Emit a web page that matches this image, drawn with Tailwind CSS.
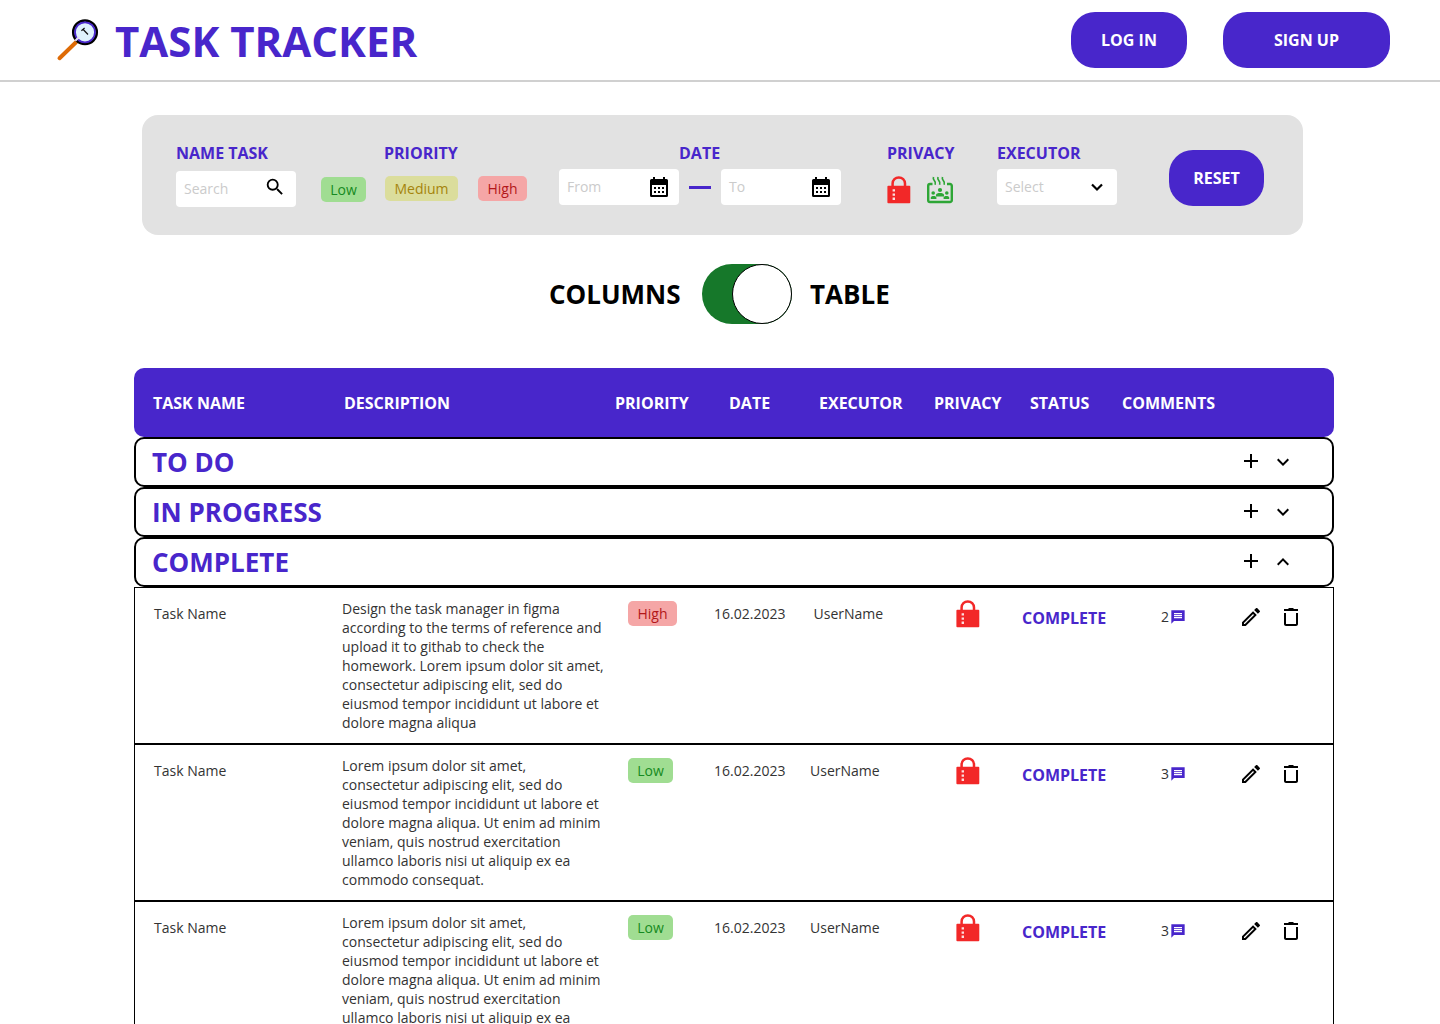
<!DOCTYPE html>
<html lang="en">
<head>
<meta charset="utf-8">
<title>Task Tracker</title>
<script src="https://cdn.jsdelivr.net/npm/@tailwindcss/browser@4"></script>
</head>
<body class="h-screen overflow-hidden bg-white font-['Open_Sans',sans-serif] text-black">
<svg class="hidden">
  <symbol id="lock" viewBox="0 0 24 28">
    <path d="M5.6 10V7.6a6.2 6.2 0 0 1 12.4 0V10" fill="none" stroke="#f22828" stroke-width="2.5"/>
    <rect x="0.4" y="9.7" width="22.9" height="17.6" rx="1" fill="#f22828"/>
    <path d="M5.6 13.2h2.4v2.4H5.600zM5.600 17.400h2.400v2.400H5.600zM5.600 21.600h2.400v2.400H5.600z" fill="#fbdede"/>
  </symbol>
  <symbol id="plus" viewBox="0 0 24 24"><path d="M11 5h2v6h6v2h-6v6h-2v-6H5v-2h6z"/></symbol>
  <symbol id="down" viewBox="0 0 24 24"><path d="M7.400 8.600 12 13.200l4.600-4.600L18 10l-6 6-6-6z"/></symbol>
  <symbol id="up" viewBox="0 0 24 24"><path d="M7.400 15.400 12 10.800l4.600 4.600L18 14l-6-6-6 6z"/></symbol>
  <symbol id="edit" viewBox="0 0 24 24"><path d="m14.060 9.020.92.92L5.920 19H5v-.92l9.060-9.060M17.660 3c-.25 0-.51.1-.7.290l-1.830 1.830 3.750 3.750 1.830-1.830a.996.996 0 0 0 0-1.410l-2.340-2.340c-.2-.2-.45-.29-.71-.29zm-3.600 3.190L3 17.250V21h3.750L17.810 9.940l-3.750-3.750z"/></symbol>
  <symbol id="trash" viewBox="0 0 24 24"><path d="M7 21c-1.100 0-2-.9-2-2V8h14v11c0 1.100-.9 2-2 2zM17 8H7v11h10zM5 4h4l1-1h4l1 1h4v2H5z"/></symbol>
  <symbol id="chat" viewBox="0 0 24 24"><path d="M22 2H2v20l4-4h16zM18 14H6v-2h12zm0-3H6V9h12zm0-3H6V6h12z"/></symbol>
  <symbol id="calendar" viewBox="0 0 18 20"><path fill-rule="evenodd" d="M3 0h2v2h8V0h2v2h1.500A1.500 1.500 0 0 1 18 3.500v15a1.500 1.500 0 0 1-1.500 1.500h-15A1.500 1.500 0 0 1 0 18.500v-15A1.500 1.500 0 0 1 1.500 2H3zM2 8v10h14V8zM4 10h2v2H4zM8 10h2v2H8zM12 10h2v2h-2zM4 14h2v2H4zM8 14h2v2H8zM12 14h2v2h-2z"/></symbol>
</svg>

<header class="flex h-[82px] items-start border-b-2 border-[#d0d0d0]">
  <svg class="ml-[56px] mt-[18px] h-[44px] w-[44px]" viewBox="0 0 44 44">
    <path d="M3.500 40.200 20 24.300" stroke="#de6b06" stroke-width="4" stroke-linecap="round"/>
    <circle cx="29" cy="14.300" r="11.800" fill="#dff2fc" stroke="#000" stroke-width="2.500"/>
    <circle cx="29" cy="14.300" r="10" fill="none" stroke="#4927cb" stroke-width="1.800"/>
    <path d="m19.300 22.800 3.800-3.800" stroke="#e6e0f4" stroke-width="2"/>
    <path d="m25.400 12.800 3.200-2.800M27.200 11.500l4.800 5" stroke="#111" stroke-width="1.200" fill="none"/>
  </svg>
  <h1 class="ml-[15px] mt-[12px] text-[42px] leading-[58px] font-bold whitespace-nowrap text-[#4826cb]">TASK TRACKER</h1>
  <button class="mt-3 ml-auto h-14 w-[116px] rounded-[24px] bg-[#4826cb] font-bold text-white">LOG IN</button>
  <button class="mt-3 mr-[50px] ml-9 h-14 w-[167px] rounded-[24px] bg-[#4826cb] font-bold text-white">SIGN UP</button>
</header>

<section class="mt-[33px] ml-[142px] flex h-[120px] w-[1161px] items-start rounded-2xl bg-[#e2e2e2] pl-[34px]">
  <div class="w-[145px] pt-[27px]">
    <h2 class="leading-[22px] font-bold text-[#4826cb]">NAME TASK</h2>
    <div class="mt-[7px] flex h-9 w-[120px] items-center justify-between rounded bg-white pr-[10px] pl-2 text-sm text-[#cbcbcb]">Search
      <svg class="mb-1 h-[22px] w-[22px] fill-black" viewBox="0 0 24 24"><path d="M15.500 14h-.79l-.28-.27A6.471 6.471 0 0 0 16 9.500 6.500 6.500 0 1 0 9.500 16c1.610 0 3.090-.59 4.230-1.570l.27.280v.79l5 4.990L20.490 19zm-6 0C7.010 14 5 11.990 5 9.500S7.010 5 9.500 5 14 7.010 14 9.500 11.990 14 9.500 14z"/></svg>
    </div>
  </div>
  <div class="w-[238px] pt-[27px] text-sm">
    <h2 class="ml-[63px] text-base leading-[22px] font-bold text-[#4826cb]">PRIORITY</h2>
    <div class="mt-3 flex items-start leading-[25px]">
      <span class="mt-px h-[25px] w-[45px] rounded-[5px] bg-[#a0dd92] text-center text-[#168a21]">Low</span>
      <span class="ml-[19px] h-[25px] w-[73px] rounded-[5px] bg-[#dbdd9c] text-center text-[#a5840c]">Medium</span>
      <span class="ml-5 h-[25px] w-[49px] rounded-[5px] bg-[#f5a6a6] text-center text-[#b3171a]">High</span>
    </div>
  </div>
  <div class="w-[328px] pt-[27px]">
    <h2 class="ml-[120px] leading-[22px] font-bold text-[#4826cb]">DATE</h2>
    <div class="mt-[5px] flex items-center text-sm text-[#cbcbcb]">
      <div class="flex h-9 w-[120px] items-center justify-between rounded bg-white pr-[11px] pl-2">From<svg class="h-5 w-[18px] fill-black"><use href="#calendar"/></svg></div>
      <div class="mx-[10px] h-[3px] w-[22px] bg-[#4826cb]"></div>
      <div class="flex h-9 w-[120px] items-center justify-between rounded bg-white pr-[11px] pl-2">To<svg class="h-5 w-[18px] fill-black"><use href="#calendar"/></svg></div>
    </div>
  </div>
  <div class="w-[110px] pt-[27px]">
    <h2 class="leading-[22px] font-bold text-[#4826cb]">PRIVACY</h2>
    <div class="mt-3 flex">
      <svg class="h-7 w-6"><use href="#lock"/></svg>
      <svg class="ml-4 h-7 w-[26px]" viewBox="0 0 26 28" fill="#2ea636">
        <path d="M5.500 8H3a1.800 1.800 0 0 0-1.800 1.800v14.400A1.800 1.800 0 0 0 3 26h20a1.800 1.800 0 0 0 1.800-1.800V9.800A1.800 1.800 0 0 0 23 8h-3" fill="none" stroke="#2ea636" stroke-width="2.400"/>
        <path d="M6.500 1c-.8 2 0 2.800 1 3.800s1.300 2 .6 4M11 1c-.8 2 0 2.800 1 3.800s1.300 2 .6 4M15.500 1c-.8 2 0 2.800 1 3.800s1.300 2 .6 4" fill="none" stroke="#2ea636" stroke-width="1.700"/>
        <circle cx="13" cy="14" r="2.100"/><circle cx="6.200" cy="17" r="1.800"/><circle cx="19.800" cy="17" r="1.800"/>
        <path d="M9 20.500v-1.600c0-2.400 8-2.400 8 0v1.600zM3.800 23v-1.600c0-2 5.600-2 5.600 0V23zM16.600 23v-1.600c0-2 5.600-2 5.600 0V23z"/>
      </svg>
    </div>
  </div>
  <div class="w-[172px] pt-[27px]">
    <h2 class="leading-[22px] font-bold text-[#4826cb]">EXECUTOR</h2>
    <div class="mt-[5px] flex h-9 w-[120px] items-center justify-between rounded bg-white pr-2 pl-2 text-sm text-[#cbcbcb]">Select
      <svg class="h-6 w-6" viewBox="0 0 24 24"><path d="m7 9.500 5 5 5-5" fill="none" stroke="#000" stroke-width="2.200"/></svg>
    </div>
  </div>
  <button class="mt-[35px] h-14 w-[95px] rounded-[24px] bg-[#4826cb] font-bold text-white">RESET</button>
</section>

<div class="mt-[29px] flex h-[60px] items-center pl-[549px] text-[26px] font-bold">
  <span class="w-[153px]">COLUMNS</span>
  <div class="flex w-[90px] justify-end rounded-full bg-[#16782a]"><div class="h-[60px] w-[60px] rounded-full border border-black bg-white"></div></div>
  <span class="ml-[18px]">TABLE</span>
</div>

<main class="mt-[44px] ml-[134px] w-[1200px]">
  <div class="grid h-[69px] grid-cols-[191px_271px_114px_90px_115px_96px_92px_1fr] items-center rounded-[10px] bg-[#4826cb] pl-[19px] font-bold text-white">
    <span>TASK NAME</span><span>DESCRIPTION</span><span>PRIORITY</span><span>DATE</span><span>EXECUTOR</span><span>PRIVACY</span><span>STATUS</span><span>COMMENTS</span>
  </div>
  <div class="flex h-[50px] items-center rounded-[10px] border-2 border-black pr-[37px] pl-4">
    <h3 class="flex-1 text-[26px] font-bold text-[#4826cb]">TO DO</h3>
    <svg class="mr-2 mb-[2px] h-6 w-6"><use href="#plus"/></svg><svg class="h-6 w-6"><use href="#down"/></svg>
  </div>
  <div class="flex h-[50px] items-center rounded-[10px] border-2 border-black pr-[37px] pl-4">
    <h3 class="flex-1 text-[26px] font-bold text-[#4826cb]">IN PROGRESS</h3>
    <svg class="mr-2 mb-[2px] h-6 w-6"><use href="#plus"/></svg><svg class="h-6 w-6"><use href="#down"/></svg>
  </div>
  <div class="flex h-[50px] items-center rounded-[10px] border-2 border-black pr-[37px] pl-4">
    <h3 class="flex-1 text-[26px] font-bold text-[#4826cb]">COMPLETE</h3>
    <svg class="mr-2 mb-[2px] h-6 w-6"><use href="#plus"/></svg><svg class="h-6 w-6"><use href="#up"/></svg>
  </div>

  <div class="grid h-[157px] grid-cols-[188px_286px_86px_96px_146px_66px_139px_78px_40px_1fr] items-start border border-black pl-[19px] text-sm leading-[19px] text-[#333]">
    <span class="mt-4">Task Name</span>
    <p class="mt-[11px] whitespace-nowrap">Design the task manager in figma<br>according to the terms of reference and<br>upload it to githab to check the<br>homework. Lorem ipsum dolor sit amet,<br>consectetur adipiscing elit, sed do<br>eiusmod tempor incididunt ut labore et<br>dolore magna aliqua</p>
    <span class="mt-[13px] w-[49px] rounded-[5px] bg-[#f5a6a6] text-center leading-[25px] text-[#b3171a]">High</span>
    <span class="mt-4">16.02.2023</span>
    <span class="mt-4 pl-[3.500px]">UserName</span>
    <svg class="mt-3 h-7 w-6"><use href="#lock"/></svg>
    <span class="mt-[19px] text-base leading-[22px] font-bold text-[#4826cb]">COMPLETE</span>
    <span class="mt-[19px] flex items-center gap-px">2<svg class="h-4 w-4 fill-[#4826cb]"><use href="#chat"/></svg></span>
    <svg class="mt-[17px] h-6 w-6 fill-black"><use href="#edit"/></svg>
    <svg class="mt-[17px] h-6 w-6 fill-black"><use href="#trash"/></svg>
  </div>
  <div class="grid h-[157px] grid-cols-[188px_286px_86px_96px_146px_66px_139px_78px_40px_1fr] items-start border border-black pl-[19px] text-sm leading-[19px] text-[#333]">
    <span class="mt-4">Task Name</span>
    <p class="mt-[11px] whitespace-nowrap">Lorem ipsum dolor sit amet,<br>consectetur adipiscing elit, sed do<br>eiusmod tempor incididunt ut labore et<br>dolore magna aliqua. Ut enim ad minim<br>veniam, quis nostrud exercitation<br>ullamco laboris nisi ut aliquip ex ea<br>commodo consequat.</p>
    <span class="mt-[13px] w-[45px] rounded-[5px] bg-[#a0dd92] text-center leading-[25px] text-[#168a21]">Low</span>
    <span class="mt-4">16.02.2023</span>
    <span class="mt-4">UserName</span>
    <svg class="mt-3 h-7 w-6"><use href="#lock"/></svg>
    <span class="mt-[19px] text-base leading-[22px] font-bold text-[#4826cb]">COMPLETE</span>
    <span class="mt-[19px] flex items-center gap-px">3<svg class="h-4 w-4 fill-[#4826cb]"><use href="#chat"/></svg></span>
    <svg class="mt-[17px] h-6 w-6 fill-black"><use href="#edit"/></svg>
    <svg class="mt-[17px] h-6 w-6 fill-black"><use href="#trash"/></svg>
  </div>
  <div class="grid h-[157px] grid-cols-[188px_286px_86px_96px_146px_66px_139px_78px_40px_1fr] items-start border border-black pl-[19px] text-sm leading-[19px] text-[#333]">
    <span class="mt-4">Task Name</span>
    <p class="mt-[11px] whitespace-nowrap">Lorem ipsum dolor sit amet,<br>consectetur adipiscing elit, sed do<br>eiusmod tempor incididunt ut labore et<br>dolore magna aliqua. Ut enim ad minim<br>veniam, quis nostrud exercitation<br>ullamco laboris nisi ut aliquip ex ea<br>commodo consequat.</p>
    <span class="mt-[13px] w-[45px] rounded-[5px] bg-[#a0dd92] text-center leading-[25px] text-[#168a21]">Low</span>
    <span class="mt-4">16.02.2023</span>
    <span class="mt-4">UserName</span>
    <svg class="mt-3 h-7 w-6"><use href="#lock"/></svg>
    <span class="mt-[19px] text-base leading-[22px] font-bold text-[#4826cb]">COMPLETE</span>
    <span class="mt-[19px] flex items-center gap-px">3<svg class="h-4 w-4 fill-[#4826cb]"><use href="#chat"/></svg></span>
    <svg class="mt-[17px] h-6 w-6 fill-black"><use href="#edit"/></svg>
    <svg class="mt-[17px] h-6 w-6 fill-black"><use href="#trash"/></svg>
  </div>
</main>
</body>
</html>
